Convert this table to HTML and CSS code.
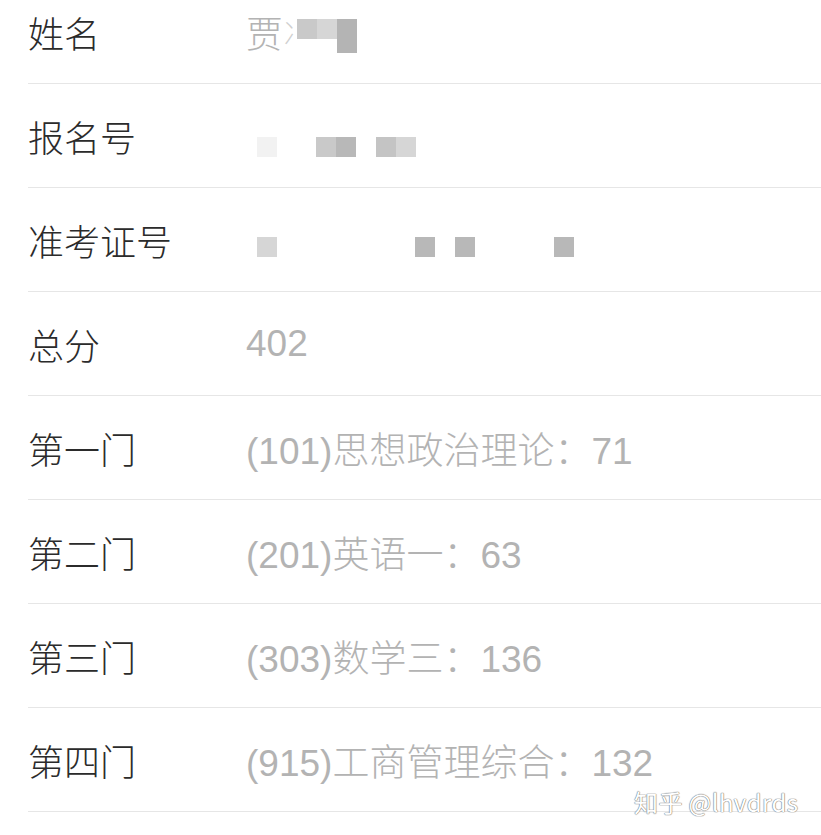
FILE: index.html
```html
<!doctype html>
<html lang="zh-CN">
<head>
    <meta charset="UTF-8">
    <title>成绩查询</title>
    <link rel="stylesheet" href="styles.css">
</head>
<body>
    <div class="list">
      <div class="row">
        <div class="label">姓名</div>
        <div class="value">贾<span class="cut">冫</span>
          <span class="mask m-name">
            <i class="px c1"></i><i class="px c2"></i><i class="px c3 tall"></i>
          </span>
        </div>
      </div>
      <div class="row">
        <div class="label">报名号</div>
        <div class="value">
          <span class="mask m-reg">
            <i class="px c4"></i><i class="px c1 gap1"></i><i class="px c5"></i><i class="px c6 gap2"></i><i class="px c2"></i>
          </span>
        </div>
      </div>
      <div class="row">
        <div class="label">准考证号</div>
        <div class="value">
          <span class="mask m-exam">
            <i class="px c2"></i><i class="px c5 gap3"></i><i class="px c5 gap2"></i><i class="px c5 gap4"></i>
          </span>
        </div>
      </div>
      <div class="row">
        <div class="label">总分</div>
        <div class="value">402</div>
      </div>
      <div class="row">
        <div class="label">第一门</div>
        <div class="value">(101)思想政治理论：71</div>
      </div>
      <div class="row">
        <div class="label">第二门</div>
        <div class="value">(201)英语一：63</div>
      </div>
      <div class="row">
        <div class="label">第三门</div>
        <div class="value">(303)数学三：136</div>
      </div>
      <div class="row">
        <div class="label">第四门</div>
        <div class="value">(915)工商管理综合：132</div>
      </div>
    </div>
    <div class="watermark">知乎 @lhvdrds</div>
</body>
</html>
```

FILE: styles.css
```css
body {
  margin: 0;
  background-color: #fff;
  font-family: "Liberation Sans", "Noto Sans CJK SC", sans-serif;
  overflow: hidden;
}
.list {
  margin-top: -20px;
  margin-left: 28px;
}
.row {
  display: flex;
  align-items: center;
  height: 103px;
  border-bottom: 1px solid #e6e6e6;
}
.label {
  width: 218px;
  flex-shrink: 0;
  font-size: 36px;
  font-weight: 300;
  color: #2b2b2b;
}
.value {
  display: flex;
  align-items: center;
  align-self: stretch;
  font-size: 37px;
  font-weight: 300;
  color: #b3b3b3;
  white-space: nowrap;
}
.cut {
  display: inline-block;
  width: 14px;
  font-size: 28px;
  color: #cfcfcf;
}
/* 打码 */
.mask {
  display: flex;
  align-items: flex-start;
  align-self: flex-start;
}
.m-name { margin-top: 39px; }
.m-reg { margin-top: 53px; margin-left: 11px; }
.m-exam { margin-top: 49px; margin-left: 11px; }
.px {
  display: block;
  width: 20px;
  height: 20px;
}
.px.tall { height: 34px; }
.gap1 { margin-left: 39px; }
.gap2 { margin-left: 20px; }
.gap3 { margin-left: 138px; }
.gap4 { margin-left: 79px; }
.c1 { background-color: #c9c9c9; }
.c2 { background-color: #d6d6d6; }
.c3 { background-color: #b4b4b4; }
.c4 { background-color: #f2f2f2; }
.c5 { background-color: #b8b8b8; }
.c6 { background-color: #c4c4c4; }
.watermark {
  position: absolute;
  left: 634px;
  top: 784px;
  font-size: 24px;
  letter-spacing: 0.4px;
  color: #fff;
  font-family: "Noto Sans CJK SC", sans-serif;
  text-shadow: 0 0 1px #777, 0 0 1px #777, 0 0 1px #999;
}
```
